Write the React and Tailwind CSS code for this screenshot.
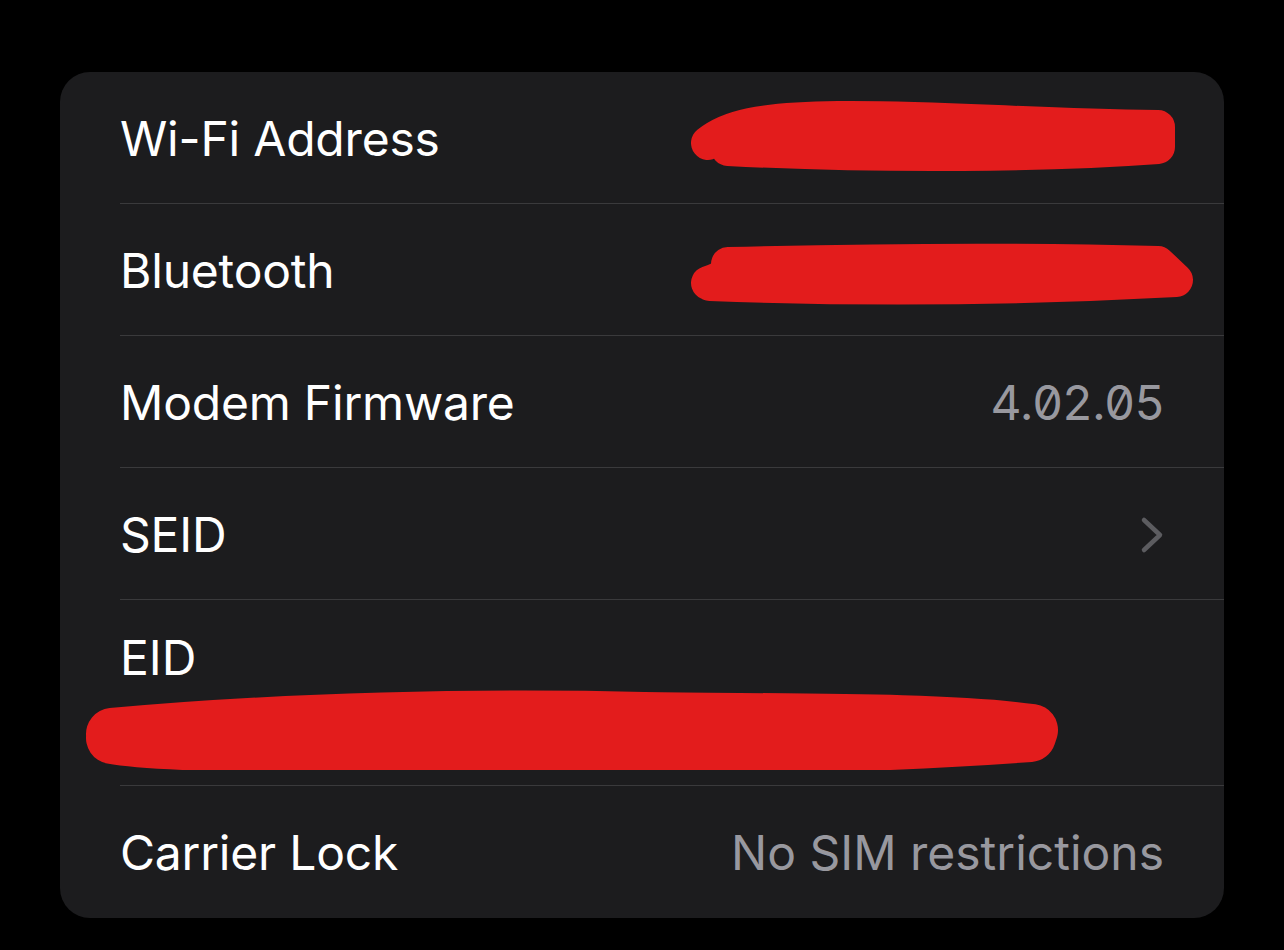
const font = { fontFamily: 'Inter, "Noto Sans", sans-serif' };

function Scribble({ width, height, d, strokeWidth, className }) {
  return (
    <svg width={width} height={height} viewBox={`0 0 ${width} ${height}`} className={className}>
      <path d={d} fill="none" stroke="#e31c1c" strokeWidth={strokeWidth} strokeLinecap="round" strokeLinejoin="round" />
    </svg>
  );
}

function Row({ label, children, last }) {
  return (
    <div
      className={`h-[132px] flex items-center justify-between pr-[60px] pt-[2px] ${
        last ? '' : 'border-b border-[#3a3a3c]'
      }`}
    >
      <span className="text-[48px] text-white leading-none tracking-[-0.2px]">{label}</span>
      {children}
    </div>
  );
}

export default function App() {
  return (
    <div className="min-h-screen bg-black pt-[72px]" style={font}>
      <div className="mx-auto w-[1164px] h-[846px] bg-[#1c1c1e] rounded-[30px] pl-[60px] overflow-hidden">
        <Row label="Wi-Fi Address">
          <Scribble
            width={490}
            height={80}
            strokeWidth={34}
            className="-mr-[14px]"
            d="M20 44 C 40 28, 70 20, 150 19 C 260 18, 320 26, 470 28 L 470 48 C 360 56, 200 58, 40 50 M30 42 L 460 40"
          />
        </Row>
        <Row label="Bluetooth">
          <Scribble
            width={510}
            height={70}
            strokeWidth={34}
            className="-mr-[34px] mt-[4px]"
            d="M20 45 C 40 38, 50 30, 40 26 C 200 22, 360 22, 470 25 L 488 42 C 340 50, 180 52, 22 46"
          />
        </Row>
        <Row label="Modem Firmware">
          <span className="text-[48px] leading-none text-[#98989f] slashed-zero">4.02.05</span>
        </Row>
        <Row label="SEID">
          <svg width="24" height="38" viewBox="0 0 24 38">
            <path d="M4 4 L20 19 L4 34" fill="none" stroke="#5c5c60" strokeWidth="4.5" strokeLinecap="round" strokeLinejoin="round" />
          </svg>
        </Row>
        <div className="h-[186px] border-b border-[#3a3a3c] pt-[34px]">
          <div className="text-[48px] text-white leading-none">EID</div>
          <Scribble
            width={990}
            height={80}
            strokeWidth={52}
            className="-ml-[36px] mt-[8px]"
            d="M28 44 C 200 28, 400 24, 560 28 C 700 30, 860 28, 948 40 L 946 46 C 760 60, 500 62, 260 58 C 140 56, 60 54, 28 48"
          />
        </div>
        <Row label="Carrier Lock" last>
          <span className="text-[48px] leading-none text-[#98989f]">No SIM restrictions</span>
        </Row>
      </div>
    </div>
  );
}
